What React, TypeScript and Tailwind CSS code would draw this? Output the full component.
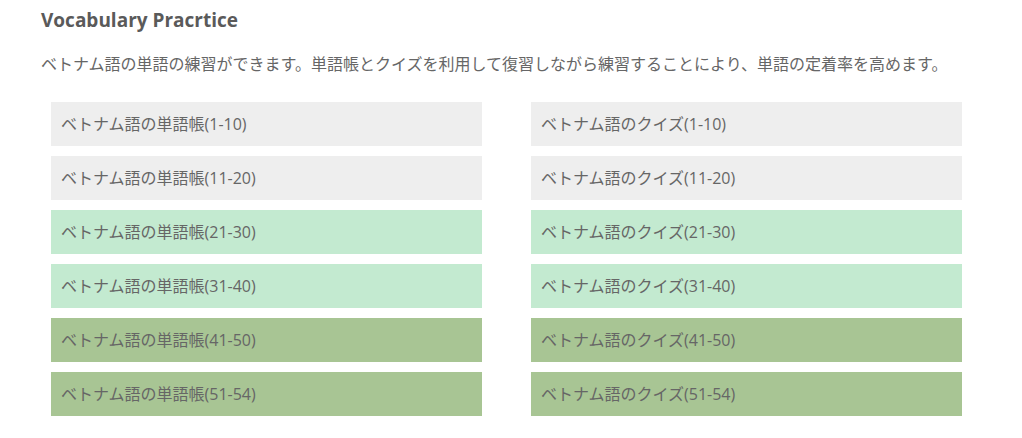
import React from "react";

const rows = [
  { l: "ベトナム語の単語帳(1-10)", r: "ベトナム語のクイズ(1-10)", bg: "bg-[#eeeeee]" },
  { l: "ベトナム語の単語帳(11-20)", r: "ベトナム語のクイズ(11-20)", bg: "bg-[#eeeeee]" },
  { l: "ベトナム語の単語帳(21-30)", r: "ベトナム語のクイズ(21-30)", bg: "bg-[#c3ead0]" },
  { l: "ベトナム語の単語帳(31-40)", r: "ベトナム語のクイズ(31-40)", bg: "bg-[#c3ead0]" },
  { l: "ベトナム語の単語帳(41-50)", r: "ベトナム語のクイズ(41-50)", bg: "bg-[#a8c594]" },
  { l: "ベトナム語の単語帳(51-54)", r: "ベトナム語のクイズ(51-54)", bg: "bg-[#a8c594]" },
];

export default function App() {
  return (
    <div
      className="w-[1022px] h-[438px] bg-white text-[#666666] overflow-hidden"
      style={{ fontFamily: '"Open Sans", "Noto Sans CJK JP", sans-serif' }}
    >
      <div className="pl-[41px] pt-[6px]">
        <h1 className="text-[19px] leading-[28px] font-bold text-[#5a5a5a]">Vocabulary Pracrtice</h1>
        <p className="mt-[18px] text-[16px] leading-[24px]">
          ベトナム語の単語の練習ができます。単語帳とクイズを利用して復習しながら練習することにより、単語の定着率を高めます。
        </p>
      </div>
      <div className="mt-[26px] pl-[51px] pr-[60px] grid grid-cols-2 gap-x-[49px] gap-y-[10px]">
        {rows.map((row, i) => (
          <React.Fragment key={i}>
            <div className={`${row.bg} h-[44px] flex items-center px-[10px] text-[16px]`}>{row.l}</div>
            <div className={`${row.bg} h-[44px] flex items-center px-[10px] text-[16px]`}>{row.r}</div>
          </React.Fragment>
        ))}
      </div>
    </div>
  );
}
